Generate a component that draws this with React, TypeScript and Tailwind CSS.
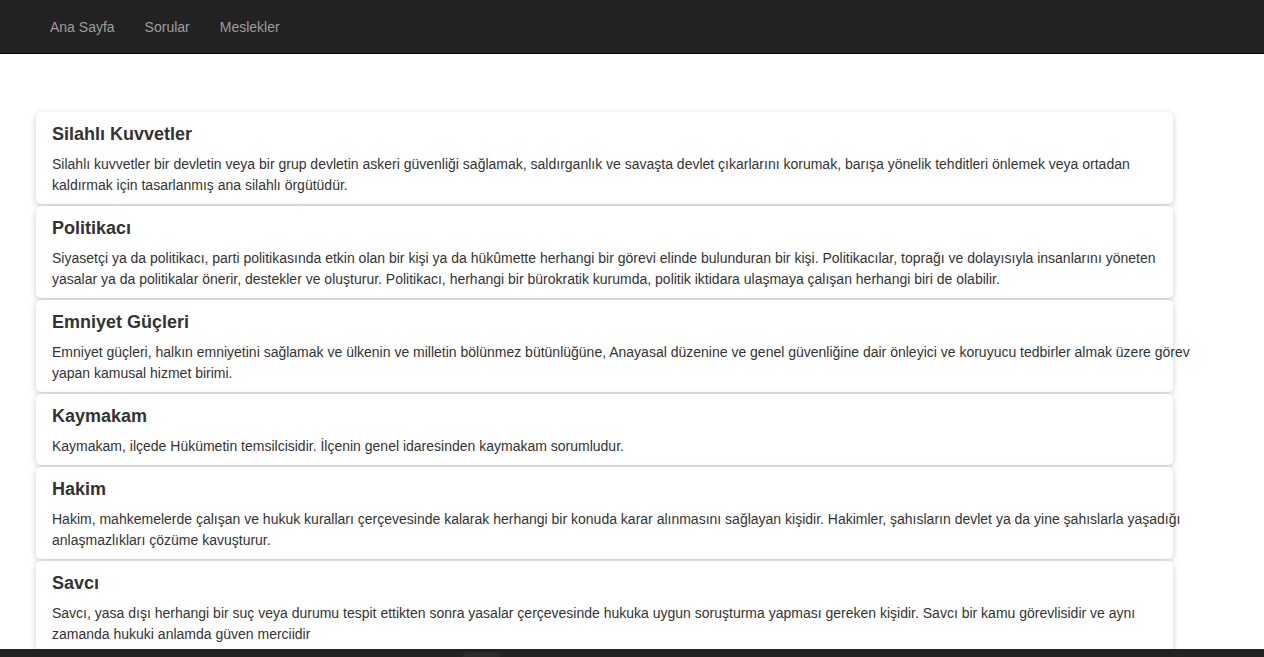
const meslekler = [
  {
    title: "Silahlı Kuvvetler",
    text: "Silahlı kuvvetler bir devletin veya bir grup devletin askeri güvenliği sağlamak, saldırganlık ve savaşta devlet çıkarlarını korumak, barışa yönelik tehditleri önlemek veya ortadan kaldırmak için tasarlanmış ana silahlı örgütüdür.",
  },
  {
    title: "Politikacı",
    text: "Siyasetçi ya da politikacı, parti politikasında etkin olan bir kişi ya da hükûmette herhangi bir görevi elinde bulunduran bir kişi. Politikacılar, toprağı ve dolayısıyla insanlarını yöneten yasalar ya da politikalar önerir, destekler ve oluşturur. Politikacı, herhangi bir bürokratik kurumda, politik iktidara ulaşmaya çalışan herhangi biri de olabilir.",
  },
  {
    title: "Emniyet Güçleri",
    text: "Emniyet güçleri, halkın emniyetini sağlamak ve ülkenin ve milletin bölünmez bütünlüğüne, Anayasal düzenine ve genel güvenliğine dair önleyici ve koruyucu tedbirler almak üzere görev yapan kamusal hizmet birimi.",
  },
  {
    title: "Kaymakam",
    text: "Kaymakam, ilçede Hükümetin temsilcisidir. İlçenin genel idaresinden kaymakam sorumludur.",
  },
  {
    title: "Hakim",
    text: "Hakim, mahkemelerde çalışan ve hukuk kuralları çerçevesinde kalarak herhangi bir konuda karar alınmasını sağlayan kişidir. Hakimler, şahısların devlet ya da yine şahıslarla yaşadığı anlaşmazlıkları çözüme kavuşturur.",
  },
  {
    title: "Savcı",
    text: "Savcı, yasa dışı herhangi bir suç veya durumu tespit ettikten sonra yasalar çerçevesinde hukuka uygun soruşturma yapması gereken kişidir. Savcı bir kamu görevlisidir ve aynı zamanda hukuki anlamda güven merciidir",
  },
];

const links = ["Ana Sayfa", "Sorular", "Meslekler"];

export default function App() {
  return (
    <div className="min-h-screen bg-white font-['Liberation_Sans',Arial,sans-serif] text-[#333]">
      <nav className="h-[54px] bg-[#222] border-b border-[#080808] flex items-center pl-[35px]">
        {links.map((l) => (
          <a key={l} href="#" className="px-[15px] text-[14px] text-[#9d9d9d] leading-5">
            {l}
          </a>
        ))}
      </nav>

      <div className="pt-[58px] pl-[36px] pb-4 flex flex-col gap-[2px]">
        {meslekler.map((m) => (
          <div
            key={m.title}
            className="w-[1137px] bg-white rounded-[5px] shadow-[0_2px_6px_rgba(0,0,0,0.2)] pt-[11px] pb-[8px] px-4"
          >
            <h4 className="text-[18px] leading-[22px] font-bold text-[#333]">{m.title}</h4>
            <p className="mt-[9px] w-[1139px] text-[14px] leading-[21px] text-[#333]">{m.text}</p>
          </div>
        ))}
      </div>

      <div className="fixed bottom-0 left-0 right-0 h-2 bg-[#222] flex justify-start">
        <div className="ml-[463px] mt-[3px] w-[37px] h-[10px] rounded-t-[4px] bg-[#2c2c2c]" />
      </div>
    </div>
  );
}
